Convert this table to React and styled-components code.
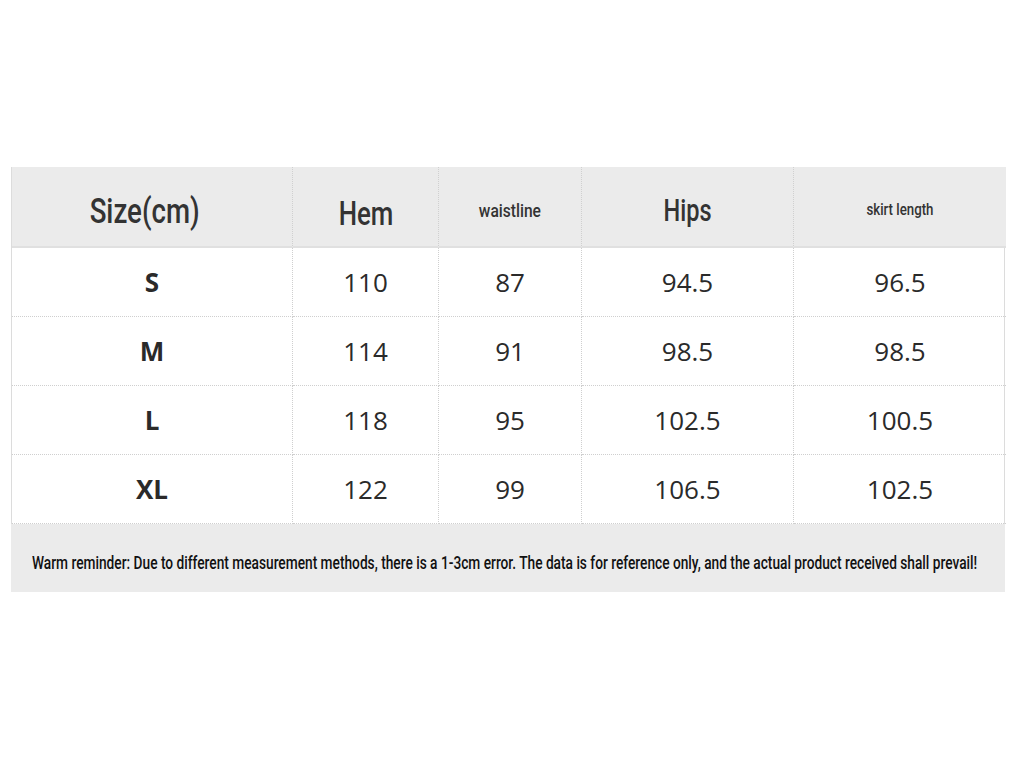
import React from 'react'
import styled, { createGlobalStyle } from 'styled-components'

const GlobalStyle = createGlobalStyle`
  html, body {
    margin: 0;
    padding: 0;
    background: #fff;
  }
`

const Page = styled.div`
  width: 1024px;
  height: 768px;
  padding: 167px 0 0 11px;
  box-sizing: border-box;
`

const Chart = styled.div`
  width: 994px;
  display: flex;
  flex-direction: column;
`

const Table = styled.div`
  display: grid;
  grid-template-columns: 281px 146px 143px 212px 212px;
  grid-template-rows: 81px;
  grid-auto-rows: 69px;
  border-left: 1px solid #dcdcdc;
  border-right: 1px solid #dcdcdc;
`

const HeadCell = styled.div`
  background: #ebebeb;
  display: flex;
  align-items: center;
  justify-content: center;
  padding-top: ${p => p.drop || 0}px;
  padding-right: ${p => p.nudge || 0}px;
  border-right: ${p => (p.last ? 'none' : '1px dotted #d0d0d0')};
  border-bottom: 2px solid #e0e0e0;
  box-sizing: border-box;
`

const Narrow = styled.span`
  display: inline-block;
  white-space: nowrap;
  font-family: 'Roboto', 'Liberation Sans', sans-serif;
  font-size: ${p => p.size}px;
  font-weight: 500;
  color: ${p => p.ink || '#333'};
  transform: scaleX(${p => p.squeeze || 0.76});
  transform-origin: ${p => p.origin || 'center'};
`

const Cell = styled.div`
  display: flex;
  align-items: center;
  justify-content: center;
  border-right: ${p => (p.last ? 'none' : '1px dotted #cfcfcf')};
  border-bottom: 1px dotted #cfcfcf;
  font-family: 'Open Sans', 'Noto Sans', sans-serif;
  font-size: 26px;
  font-weight: ${p => (p.bold ? 700 : 400)};
  color: #2a2a2a;
  box-sizing: border-box;
`

const Footer = styled.div`
  height: 68px;
  background: #ebebeb;
  display: flex;
  align-items: center;
  padding: 8px 0 0 21px;
  box-sizing: border-box;
  overflow: hidden;
`

const headers = [
  { label: 'Size(cm)', size: 35, drop: 10, nudge: 14, squeeze: 0.79 },
  { label: 'Hem', size: 34, drop: 12, squeeze: 0.76 },
  { label: 'waistline', size: 19, drop: 8, squeeze: 0.82 },
  { label: 'Hips', size: 31, drop: 8, squeeze: 0.76 },
  { label: 'skirt length', size: 17, drop: 4, squeeze: 0.78 },
]

const rows = [
  ['S', '110', '87', '94.5', '96.5'],
  ['M', '114', '91', '98.5', '98.5'],
  ['L', '118', '95', '102.5', '100.5'],
  ['XL', '122', '99', '106.5', '102.5'],
]

export default function App() {
  return (
    <Page>
      <GlobalStyle />
      <Chart>
        <Table>
          {headers.map((h, i) => (
            <HeadCell key={h.label} drop={h.drop} nudge={h.nudge} last={i === headers.length - 1}>
              <Narrow size={h.size} squeeze={h.squeeze}>{h.label}</Narrow>
            </HeadCell>
          ))}
          {rows.map(row =>
            row.map((v, i) => (
              <Cell key={row[0] + i} bold={i === 0} last={i === row.length - 1}>
                {v}
              </Cell>
            ))
          )}
        </Table>
        <Footer>
          <Narrow size={18} squeeze={0.762} origin="left" ink="#111">
            Warm reminder: Due to different measurement methods, there is a 1-3cm error. The data is for reference only, and the actual product received shall prevail!
          </Narrow>
        </Footer>
      </Chart>
    </Page>
  )
}
